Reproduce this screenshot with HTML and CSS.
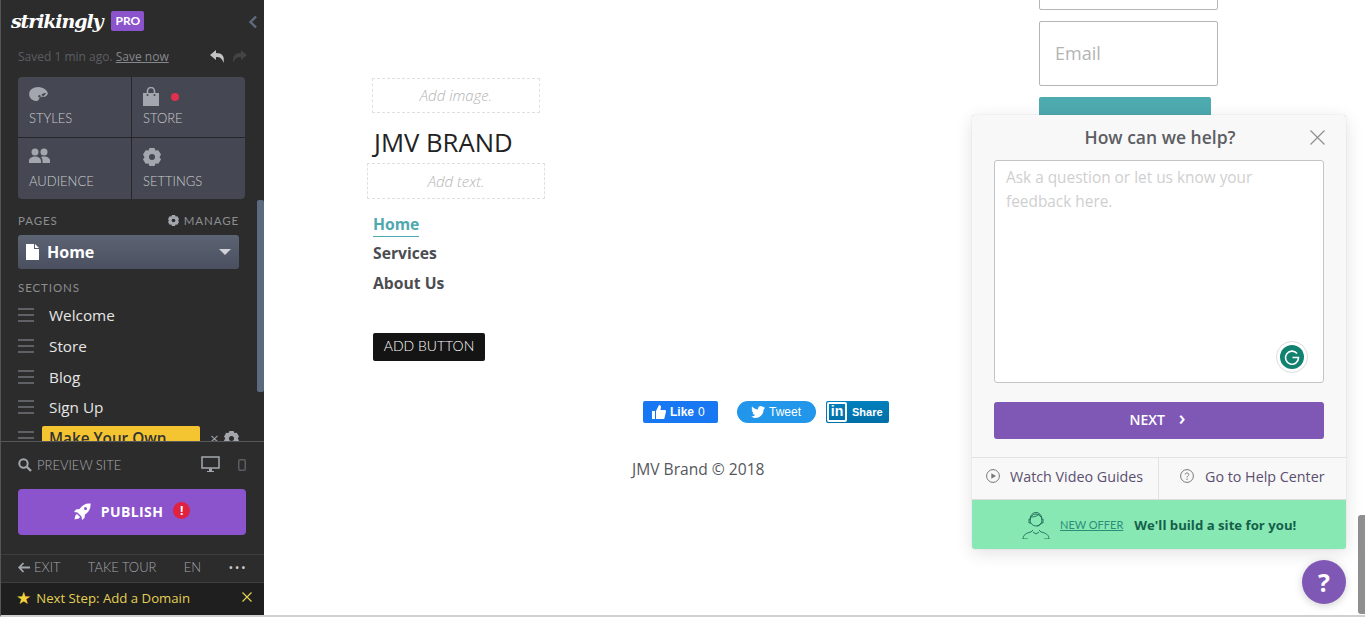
FILE: index.html
```html
<!DOCTYPE html>
<html lang="en">
<head>
    <meta charset="UTF-8">
    <title>Strikingly Editor</title>
    <link rel="stylesheet" href="styles.css">
</head>
<body>
    <aside class="sidebar">
        <div class="sidebar-scroll">
            <div class="logo-row">
                <span class="logo">strikingly</span>
                <span class="pro-badge">PRO</span>
                <svg class="collapse-icon" width="10" height="14" viewBox="0 0 10 14"><path d="M8 1.500 2.500 7 8 12.500" fill="none" stroke="#5f6b7d" stroke-width="2.400"/></svg>
            </div>
            <div class="save-row">
                <span>Saved 1 min ago. <a class="save-link">Save now</a></span>
                <span class="undo-redo">
                    <svg width="17" height="15" viewBox="0 0 17 15"><path d="M7 1 1 6l6 5V8c4 0 6 1 7.500 6C16 7 13 4 7 4z" fill="#c4c4c4"/></svg>
                    <svg width="17" height="15" viewBox="0 0 17 15"><path d="M10 1l6 5-6 5V8C6 8 4 9 2.500 14 1 7 4 4 10 4z" fill="#444"/></svg>
                </span>
            </div>
            <div class="tiles">
                <div class="tile">
                    <svg width="19" height="14" viewBox="0 0 20 15"><path d="M10 0C4 0 0 3 0 8c0 4 4 7 8 7 3 0 2-3 4-4 2-.800 5 0 6-1 1-1 2-2 2-3 0-3-5-7-10-7z" fill="#a3a6ac"/><path d="M13 8.500c1-1.500 3-2 5-2-.500 1.500-2 2.500-2.500 3.500z" fill="#454852"/><circle cx="11" cy="10" r="1.300" fill="#454852"/></svg>
                    <span>STYLES</span>
                </div>
                <div class="tile">
                    <span class="tile-icons">
                        <svg width="16" height="19" viewBox="0 0 16 19"><path d="M0 6h16v13H0z" fill="#a3a6ac"/><path d="M4.500 6V4a3.500 3.500 0 0 1 7 0v2" fill="none" stroke="#a3a6ac" stroke-width="1.600"/><circle cx="4.500" cy="8" r="1" fill="#454852"/><circle cx="11.500" cy="8" r="1" fill="#454852"/></svg>
                        <i class="red-dot"></i>
                    </span>
                    <span>STORE</span>
                </div>
                <div class="tile">
                    <svg width="21" height="15" viewBox="0 0 21 15"><circle cx="6" cy="4" r="3.500" fill="#a3a6ac"/><circle cx="15" cy="4" r="3.500" fill="#a3a6ac"/><path d="M0 15v-2c0-3 3-4.500 6-4.500s6 1.500 6 4.500v2zM13.500 15v-3c0-1-.500-2-1.500-3 1-.500 2-.500 3-.500 3 0 6 1.500 6 4v2.500z" fill="#a3a6ac"/></svg>
                    <span>AUDIENCE</span>
                </div>
                <div class="tile">
                    <svg width="18" height="18" viewBox="0 0 18 18"><path d="M6.500 0h5l1 2.500 2.800-.300L18 6.500l-1.500 2.500 1.500 2.500-2.700 4.300-2.800-.300-1 2.500h-5l-1-2.500-2.800.300L0 11.500 1.500 9 0 6.500l2.700-4.300 2.800.300z" fill="#a3a6ac"/><circle cx="9" cy="9" r="3" fill="#454852"/></svg>
                    <span>SETTINGS</span>
                </div>
            </div>
            <div class="pages-head">
                <span>PAGES</span>
                <span class="manage">
                    <svg width="11" height="11" viewBox="0 0 18 18"><path d="M6.500 0h5l1 2.500 2.800-.300L18 6.500l-1.500 2.500 1.500 2.500-2.700 4.300-2.800-.300-1 2.500h-5l-1-2.500-2.800.300L0 11.500 1.500 9 0 6.500l2.700-4.300 2.800.300z" fill="#a3a6ac"/><circle cx="9" cy="9" r="3" fill="#2c2c2c"/></svg>
                    MANAGE
                </span>
            </div>
            <div class="page-select">
                <svg width="13" height="16" viewBox="0 0 13 16"><path d="M0 0h8v5h5v11H0zM9 0l4 4H9z" fill="#fff"/></svg>
                <span class="page-name">Home</span>
                <i class="caret"></i>
            </div>
            <div class="sections-head">SECTIONS</div>
            <ul class="section-list">
                <li><i class="grip"></i>Welcome</li>
                <li><i class="grip"></i>Store</li>
                <li><i class="grip"></i>Blog</li>
                <li><i class="grip"></i>Sign Up</li>
                <li class="section-new">
                    <i class="grip"></i>
                    <span class="section-tag">Make Your Own</span>
                    <span class="section-x">×</span>
                    <svg width="15" height="15" viewBox="0 0 18 18"><path d="M6.500 0h5l1 2.500 2.800-.300L18 6.500l-1.500 2.500 1.500 2.500-2.700 4.300-2.800-.300-1 2.500h-5l-1-2.500-2.800.300L0 11.500 1.500 9 0 6.500l2.700-4.300 2.800.300z" fill="#a3a6ac"/><circle cx="9" cy="9" r="3" fill="#2c2c2c"/></svg>
                </li>
            </ul>
            <div class="side-scrollbar"></div>
        </div>
        <div class="sidebar-bottom">
            <div class="preview-row">
                <svg width="14" height="14" viewBox="0 0 14 14"><circle cx="5.500" cy="5.500" r="4.200" fill="none" stroke="#a3a6ac" stroke-width="2"/><path d="M8.500 8.500 13 13" stroke="#a3a6ac" stroke-width="2.400"/></svg>
                <span class="preview-label">PREVIEW SITE</span>
                <svg class="desktop-icon" width="19" height="17" viewBox="0 0 19 17"><path d="M1 1h17v11H1z" fill="none" stroke="#a3a6ac" stroke-width="1.500"/><path d="M8 12.500h3V15h2v1H6v-1h2z" fill="#a3a6ac"/></svg>
                <svg class="phone-icon" width="8" height="12" viewBox="0 0 8 12"><rect x=".75" y=".75" width="6.500" height="10.500" rx="1" fill="none" stroke="#5a5d62" stroke-width="1.500"/></svg>
            </div>
            <div class="publish">
                <svg width="17" height="17" viewBox="0 0 17 17"><path d="M16.500.500C12 0 8 2 5.500 6L2 6.500 0 9l3.500.500L7.500 13.500 8 17l2.500-2 .500-3.500c4-2.500 6-6.500 5.500-11.500z" fill="#fff"/><circle cx="11.500" cy="5.500" r="1.500" fill="#8c54cc"/><path d="M3 11c-1.500.500-2 2.500-2.500 5.500C3.500 16 5.500 15.500 6 14z" fill="#fff"/></svg>
                <span>PUBLISH</span>
                <i class="alert-dot">!</i>
            </div>
            <div class="exit-row">
                <span class="exit">
                    <svg width="12" height="11" viewBox="0 0 12 11"><path d="M5.500 1 1.200 5.500 5.500 10M1.500 5.500H12" fill="none" stroke="#a3a6ac" stroke-width="1.800"/></svg>
                    EXIT
                </span>
                <span>TAKE TOUR</span>
                <span>EN</span>
                <span class="dots">•••</span>
            </div>
            <div class="next-step">
                <span class="star">★</span>
                <span class="next-text">Next Step: Add a Domain</span>
                <svg class="next-close" width="10" height="10" viewBox="0 0 10 10"><path d="M.5.500l9 9M9.500.500l-9 9" stroke="#e3cf55" stroke-width="1.200"/></svg>
            </div>
        </div>
    </aside>

    <main class="site">
        <div class="site-top">
            <div class="brand-col">
                <div class="placeholder placeholder-image">Add image.</div>
                <h1 class="brand-title">JMV BRAND</h1>
                <div class="placeholder placeholder-text">Add text.</div>
                <nav class="site-nav">
                    <a class="nav-active">Home</a>
                    <a>Services</a>
                    <a>About Us</a>
                </nav>
                <a class="add-button">ADD BUTTON</a>
            </div>
            <div class="signup-col">
                <div class="field field-cut"></div>
                <div class="field">Email</div>
                <div class="submit-btn"></div>
            </div>
        </div>
        <div class="social-row">
            <span class="fb-like">
                <svg width="14" height="14" viewBox="0 0 14 14"><path d="M0 6h3v8H0zM4 6l3-6c1.500 0 2 1 2 2L8.500 5H13c1 0 1 1 1 1.500L12.500 13c0 .500-.500 1-1 1H4z" fill="#fff"/></svg>
                <b>Like</b> 0
            </span>
            <span class="tw-tweet">
                <svg width="14" height="12" viewBox="0 0 14 12"><path d="M14 1.500c-.500.300-1 .400-1.600.500.600-.400 1-.900 1.200-1.600-.500.300-1.100.600-1.800.700C11.300.200 10.600 0 9.800 0 8.200 0 7 1.300 7 2.800c0 .200 0 .400.100.700C4.700 3.400 2.600 2.200 1.100.500.800 1 .700 1.500.700 2c0 1 .500 1.900 1.300 2.400-.500 0-.900-.100-1.300-.400 0 1.400 1 2.500 2.300 2.800-.500.100-.900.100-1.300.100.400 1.100 1.400 1.900 2.600 2C3.400 9.700 2 10.200.700 10.200H0C1.300 11 2.800 12 4.400 12c5.300 0 8.200-4.400 8.200-8.200v-.400c.600-.400 1-.900 1.400-1.900z" fill="#fff"/></svg>
                Tweet
            </span>
            <span class="li-share">
                <span class="li-mark">in</span>
                <b>Share</b>
            </span>
        </div>
        <p class="copyright">JMV Brand © 2018</p>

        <div class="site-scrollbar"></div>

        <section class="help-panel">
            <div class="help-body">
                <div class="help-head">
                    <h2>How can we help?</h2>
                    <svg class="help-close" width="15" height="15" viewBox="0 0 15 15"><path d="M.5.500l14 14M14.500.500l-14 14" stroke="#8c8c8c" stroke-width="1.100"/></svg>
                </div>
                <div class="help-textarea">
                    Ask a question or let us know your feedback here.
                    <span class="grammarly">
                        <svg width="24" height="24" viewBox="0 0 24 24"><circle cx="12" cy="12" r="12" fill="#11826f"/><path d="M17 8.500A6.500 6.500 0 1 0 18.500 12.500H12.500" fill="none" stroke="#fff" stroke-width="1.600"/></svg>
                    </span>
                </div>
                <div class="next-btn">NEXT <span class="next-arrow">›</span></div>
            </div>
            <div class="help-links">
                <a class="help-link help-link-video">
                    <svg width="14" height="14" viewBox="0 0 14 14"><circle cx="7" cy="7" r="6.400" fill="none" stroke="#777" stroke-width="1"/><path d="M5.300 4.200 10 7l-4.700 2.800z" fill="#777"/></svg>
                    <span>Watch Video Guides</span>
                </a>
                <a class="help-link help-link-center">
                    <svg width="14" height="14" viewBox="0 0 14 14"><circle cx="7" cy="7" r="6.400" fill="none" stroke="#777" stroke-width="1"/><path d="M5.200 5.500C5.200 4.500 6 4 7 4s1.800.600 1.800 1.500C8.800 7 7 7 7 8.500" fill="none" stroke="#777" stroke-width="1"/><circle cx="7" cy="10.200" r=".7" fill="#777"/></svg>
                    <span>Go to Help Center</span>
                </a>
            </div>
            <div class="offer">
                <svg width="28" height="28" viewBox="0 0 28 28" fill="none" stroke="#1c6a55" stroke-width=".9"><circle cx="14" cy="9" r="6"/><path d="M8 9c0-5 3-7.500 6-7.500S20 4 20 9M8.500 6c3 0 6-.500 8-2.500 1 1.500 2 2 3 2.500M7 8v4h2M21 8v4h-1.500M19.500 12c-1 2-3 3-4.500 3M6 28H1c0-4 3-6 8-7l2-2M22 28h5c0-4-3-6-8-7l-2-2M11 21l3 2 3-2"/></svg>
                <a class="offer-link">NEW OFFER</a>
                <b class="offer-text">We'll build a site for you!</b>
            </div>
        </section>
        <div class="help-fab">?</div>
    </main>
</body>
</html>
```

FILE: styles.css
```css
* {
    box-sizing: border-box;
}

html, body {
    height: 100%;
}

body {
    margin: 0;
    display: flex;
    height: 617px;
    overflow: hidden;
    background-color: #fff;
    font-family: "Open Sans", sans-serif;
}

/* sidebar */
.sidebar {
    width: 264px;
    height: 617px;
    flex-shrink: 0;
    display: flex;
    flex-direction: column;
    background-color: #2c2c2c;
    border-left: 1px solid #555;
    border-bottom: 2px solid #d0d0d0;
    font-family: Lato, sans-serif;
    color: #a3a6ac;
}

.sidebar-scroll {
    position: relative;
    height: 441px;
    padding: 0 18px 0 17px;
    overflow: hidden;
    flex-shrink: 0;
}

.logo-row {
    display: flex;
    align-items: center;
    height: 41px;
    margin-left: -7px;
}

.logo {
    font-family: "DejaVu Serif", serif;
    font-weight: bold;
    font-style: italic;
    font-size: 19px;
    letter-spacing: -1.100px;
    color: #fff;
}

.pro-badge {
    margin-left: 9px;
    width: 33px;
    height: 20px;
    line-height: 20px;
    border-radius: 2px;
    background-color: #8c54cc;
    color: #fff;
    font-size: 12px;
    font-weight: bold;
    text-align: center;
}

.collapse-icon {
    position: absolute;
    left: 247px;
    top: 15px;
}

.save-row {
    display: flex;
    justify-content: space-between;
    align-items: center;
    height: 30px;
    font-family: "Open Sans", sans-serif;
    font-size: 12px;
    color: #5c5e62;
}

.save-link {
    color: #86888c;
    text-decoration: underline;
}

.undo-redo {
    display: flex;
    gap: 5px;
    margin-right: -2px;
}

.tiles {
    display: grid;
    grid-template-columns: 1fr 1fr;
    grid-template-rows: 60px 61px;
    gap: 1px;
    width: 227px;
    height: 122px;
    margin-top: 6px;
    border-radius: 4px;
    overflow: hidden;
    background-color: #25262b;
}

.tile {
    display: flex;
    flex-direction: column;
    justify-content: space-between;
    align-items: flex-start;
    padding: 10px 11px 11px;
    background-color: #454852;
    font-size: 13px;
    font-weight: 300;
    color: #c9cace;
    height: 100%;
}

.tile:nth-child(n+3) {
    padding-bottom: 10px;
}

.tile-icons {
    display: flex;
    align-items: center;
    gap: 12px;
}

.red-dot {
    width: 8px;
    height: 8px;
    border-radius: 50%;
    background-color: #e0314f;
}

.pages-head {
    display: flex;
    justify-content: space-between;
    align-items: center;
    width: 221px;
    margin-top: 13px;
    height: 16px;
    font-size: 11.500px;
    letter-spacing: .9px;
    color: #8c8e92;
}

.manage {
    display: flex;
    align-items: center;
    gap: 5px;
}

.page-select {
    display: flex;
    align-items: center;
    width: 221px;
    height: 34px;
    margin-top: 7px;
    padding: 0 8px;
    border-radius: 3px;
    background: linear-gradient(#5c6373, #4a5060);
    font-family: "Open Sans", sans-serif;
}

.page-name {
    flex: 1;
    margin-left: 8px;
    font-size: 16px;
    font-weight: bold;
    color: #fff;
}

.caret {
    width: 0;
    height: 0;
    border-left: 6.500px solid transparent;
    border-right: 6.500px solid transparent;
    border-top: 6px solid #d0d2d8;
}

.sections-head {
    margin-top: 12px;
    height: 16px;
    font-size: 11.500px;
    letter-spacing: .9px;
    color: #8c8e92;
}

.section-list {
    list-style: none;
    margin: 3px 0 0;
    padding: 0;
    font-family: "Open Sans", sans-serif;
    font-size: 15.300px;
    color: #e6e6e6;
}

.section-list li {
    display: flex;
    align-items: center;
    height: 30.700px;
}

.grip {
    display: block;
    width: 16px;
    height: 14px;
    margin-right: 15px;
    border-top: 2px solid #5f6167;
    border-bottom: 2px solid #5f6167;
    background: linear-gradient(#5f6167, #5f6167) center / 100% 2px no-repeat;
}

.section-new .grip {
    margin-right: 8px;
}

.section-tag {
    width: 158px;
    height: 24px;
    padding-left: 7px;
    border-radius: 2px;
    background-color: #f5c531;
    color: #333;
    font-weight: 600;
    line-height: 24px;
    white-space: nowrap;
}

.section-x {
    margin: 0 5px 0 10px;
    color: #a3a6ac;
}

.side-scrollbar {
    position: absolute;
    left: 256px;
    top: 200px;
    width: 7px;
    height: 192px;
    border-radius: 2px;
    background-color: #5c6a80;
}

.sidebar-bottom {
    flex: 1;
    display: flex;
    flex-direction: column;
    border-top: 1px solid #55575b;
}

.preview-row {
    display: flex;
    align-items: center;
    height: 47px;
    padding: 0 18px 2px 17px;
}

.preview-label {
    flex: 1;
    margin-left: 5px;
    font-size: 13px;
    font-weight: 300;
    color: #a8aaae;
}

.phone-icon {
    margin-left: 18px;
}

.publish {
    display: flex;
    justify-content: center;
    align-items: center;
    gap: 10px;
    width: 228px;
    height: 46px;
    margin-left: 17px;
    padding-bottom: 1px;
    border-radius: 4px;
    background-color: #8c54cc;
    color: #fff;
    font-family: "Open Sans", sans-serif;
    font-size: 14px;
    font-weight: bold;
    letter-spacing: .4px;
}

.alert-dot {
    display: block;
    width: 17px;
    height: 17px;
    margin-top: -2px;
    border-radius: 50%;
    background-color: #e0213f;
    color: #fff;
    font-style: normal;
    font-size: 12px;
    line-height: 17px;
    text-align: center;
    letter-spacing: 0;
}

.exit-row {
    display: flex;
    justify-content: space-between;
    align-items: center;
    height: 28px;
    margin-top: 19px;
    padding: 0 17px 3px 17px;
    border-top: 1px solid #3e3e3e;
    font-size: 13px;
    font-weight: 300;
    color: #a3a6ac;
}

.exit {
    display: flex;
    align-items: center;
    gap: 4px;
}

.dots {
    font-size: 9px;
    letter-spacing: 1px;
    color: #c9cace;
}

.next-step {
    flex: 1;
    display: flex;
    align-items: center;
    padding: 0 12px 2px 15px;
    border-top: 1px solid #3e3e3e;
    background-color: #1f1f1f;
    font-family: "Open Sans", sans-serif;
    font-size: 13.200px;
    color: #e3cf55;
}

.star {
    margin-right: 5px;
    font-family: "DejaVu Sans", sans-serif;
    font-size: 17px;
    color: #f5d23c;
}

.next-text {
    flex: 1;
}

.next-close {
    margin-top: -2px;
}

/* site preview */
.site {
    position: relative;
    flex: 1;
    height: 617px;
    overflow: hidden;
    border-bottom: 2px solid #d0d0d0;
    color: #50525a;
}

.site-top {
    display: flex;
    justify-content: space-between;
    height: 390px;
    padding: 0 147px 0 108px;
}

.brand-col {
    padding-top: 78px;
    width: 180px;
}

.placeholder {
    display: flex;
    justify-content: center;
    align-items: center;
    border: 1px dashed #e0e0e0;
    font-size: 15px;
    font-weight: 300;
    font-style: italic;
    color: #b4b4b4;
}

.placeholder-image {
    width: 168px;
    height: 35px;
    padding-bottom: 2px;
}

.brand-title {
    margin: 11px 0 1px 2px;
    height: 38px;
    font-size: 25.700px;
    line-height: 38px;
    font-weight: 400;
    color: #222;
    white-space: nowrap;
}

.placeholder-text {
    width: 178px;
    height: 36px;
    margin-left: -5px;
}

.site-nav {
    display: flex;
    flex-direction: column;
    align-items: flex-start;
    margin-top: 12px;
    margin-left: 1px;
    font-size: 15.700px;
    font-weight: bold;
    color: #4b4d52;
}

.site-nav a {
    height: 29.500px;
    line-height: 25px;
}

.site-nav .nav-active {
    height: 26px;
    margin-bottom: 4px;
    line-height: 26px;
    color: #4fa8ae;
    border-bottom: 1px solid #4fa8ae;
}

.add-button {
    display: block;
    width: 112px;
    height: 28px;
    margin: 33px 0 0 1px;
    border-radius: 2px;
    background-color: #141414;
    color: #fff;
    font-family: Lato, sans-serif;
    font-size: 14px;
    font-weight: 300;
    line-height: 26px;
    text-align: center;
}

.signup-col {
    width: 179px;
    margin-top: -55px;
}

.field {
    height: 65px;
    margin-bottom: 11px;
    padding-left: 15px;
    border: 1px solid #b5b5b5;
    border-radius: 2px;
    font-size: 18px;
    line-height: 63px;
    color: #b4b4b4;
}

.submit-btn {
    width: 172px;
    height: 50px;
    border-radius: 2px;
    background-color: #4dabb0;
}

.social-row {
    display: flex;
    align-items: center;
    height: 24px;
    margin-top: 10px;
    padding-left: 379px;
    font-family: "Liberation Sans", sans-serif;
    font-size: 12px;
    color: #fff;
}

.fb-like {
    display: flex;
    align-items: center;
    gap: 4px;
    width: 75px;
    height: 22px;
    padding-left: 9px;
    border-radius: 2px;
    background-color: #1877f2;
}

.tw-tweet {
    display: flex;
    align-items: center;
    gap: 4px;
    width: 79px;
    height: 22px;
    margin-left: 19px;
    padding-left: 14px;
    border-radius: 11px;
    background-color: #2196ea;
}

.li-share {
    display: flex;
    align-items: center;
    gap: 5px;
    width: 63px;
    height: 22px;
    margin-left: 10px;
    padding-left: 1px;
    border-radius: 2px;
    background: linear-gradient(#0080bd, #006fa8);
    font-size: 11px;
}

.li-mark {
    width: 20px;
    height: 20px;
    border: 2px solid #fff;
    border-radius: 2px;
    color: #fff;
    font-size: 14px;
    font-weight: bold;
    line-height: 15px;
    text-align: center;
}

.copyright {
    margin: 34px 0 0;
    padding-left: 368px;
    font-size: 15.600px;
    line-height: 22px;
    color: #55575c;
}

.site-scrollbar {
    position: absolute;
    right: 0;
    bottom: 1px;
    width: 7px;
    height: 99px;
    border-radius: 3px 0 0 3px;
    background-color: #8f8f8f;
}

/* help widget */
.help-panel {
    position: absolute;
    left: 708px;
    top: 115px;
    width: 374px;
    height: 434px;
    display: flex;
    flex-direction: column;
    border-radius: 3px;
    background-color: #f8f8f8;
    box-shadow: 0 0 1px rgba(0, 0, 0, 0.25), 0 4px 18px rgba(0, 0, 0, 0.12);
}

.help-body {
    flex: 1;
    padding: 0 22px;
}

.help-head {
    position: relative;
    height: 45px;
    padding: 0 0 2px 2px;
    display: flex;
    justify-content: center;
    align-items: center;
}

.help-head h2 {
    margin: 0;
    font-size: 17.500px;
    font-weight: 600;
    color: #5c5e63;
}

.help-close {
    position: absolute;
    right: -1px;
    top: 15px;
}

.help-textarea {
    position: relative;
    height: 223px;
    padding: 5px 50px 0 11px;
    border: 1px solid #c4c4c4;
    border-radius: 3px;
    background-color: #fff;
    font-size: 15.400px;
    line-height: 23.500px;
    color: #cfcfcf;
}

.grammarly {
    position: absolute;
    right: 15px;
    bottom: 9px;
    width: 32px;
    height: 32px;
    display: flex;
    justify-content: center;
    align-items: center;
    border: 1px solid #ddd;
    border-radius: 50%;
    background-color: #fff;
}

.next-btn {
    display: flex;
    justify-content: center;
    align-items: center;
    gap: 14px;
    height: 37px;
    margin-top: 19px;
    padding: 0 3px 2px 0;
    border-radius: 3px;
    background-color: #7f58b5;
    color: #fff;
    font-size: 14px;
    font-weight: 600;
}

.next-arrow {
    font-size: 20px;
    line-height: 20px;
    margin-top: -3px;
}

.help-links {
    display: flex;
    height: 43px;
    border-top: 1px solid #e2e2e2;
    border-bottom: 1px solid #dcdcdc;
    font-size: 14.300px;
    color: #5b4f70;
}

.help-link {
    display: flex;
    align-items: center;
    padding-bottom: 4px;
}

.help-link svg {
    margin-top: -2px;
}

.help-link-video {
    gap: 10px;
    width: 187px;
    padding-left: 14px;
    border-right: 1px solid #e2e2e2;
}

.help-link-center {
    gap: 11px;
    padding-left: 21px;
}

.offer {
    display: flex;
    align-items: center;
    height: 49px;
    padding-left: 50px;
    border-radius: 0 0 3px 3px;
    background-color: #88e8b4;
}

.offer-link {
    margin-left: 10px;
    font-family: Lato, sans-serif;
    font-size: 11px;
    color: #2b8f78;
    text-decoration: underline;
}

.offer-text {
    margin-left: 11px;
    font-size: 13.200px;
    color: #14604a;
}

.help-fab {
    position: absolute;
    left: 1038px;
    top: 560px;
    width: 44px;
    height: 44px;
    border-radius: 50%;
    background-color: #7f58b5;
    box-shadow: 0 2px 8px rgba(0, 0, 0, 0.18);
    color: #fff;
    font-size: 25px;
    font-weight: bold;
    line-height: 44px;
    text-align: center;
}
```
